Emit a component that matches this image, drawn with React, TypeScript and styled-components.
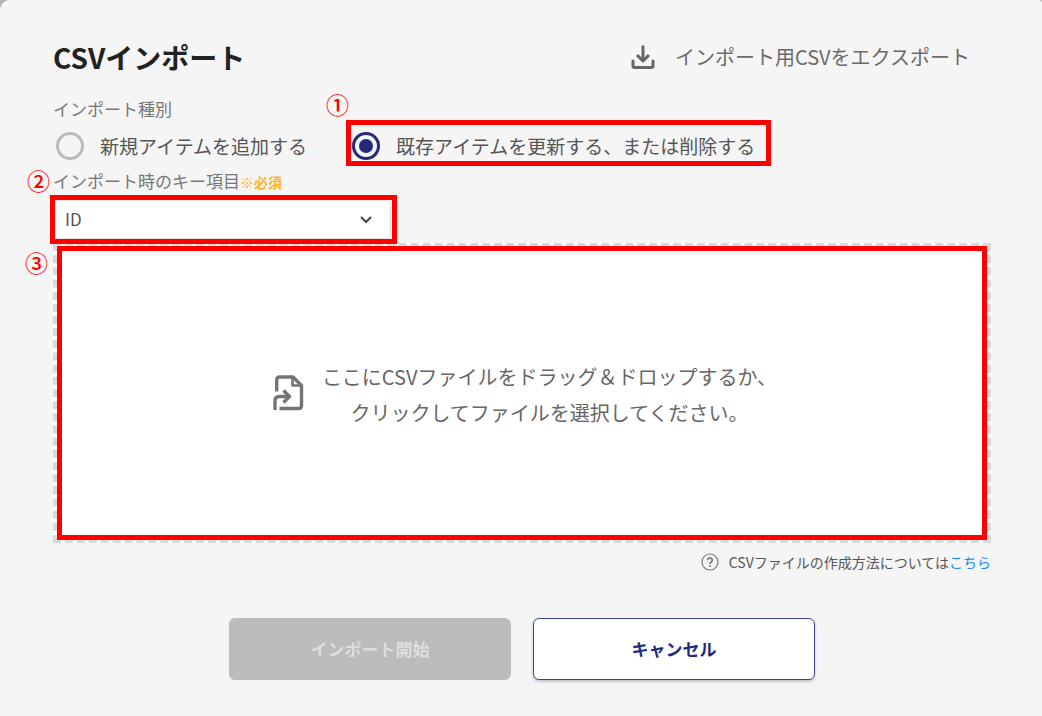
import React from "react";
import styled, { createGlobalStyle, css } from "styled-components";

const GlobalStyle = createGlobalStyle`
  *, *::before, *::after { box-sizing: border-box; }
  body {
    margin: 0;
    background: #b4b4b4;
    font-family: "Noto Sans CJK JP", sans-serif;
    color: #555;
  }
  button, select { font-family: inherit; }
`;

const Dialog = styled.main`
  min-height: 100vh;
  padding: 36px 51px 36px 53px;
  border-radius: 10px 4px 0 0;
  background: #f5f5f5;
`;

const Header = styled.header`
  display: flex;
  align-items: center;
  justify-content: space-between;
  height: 42px;
  padding-right: 21px;
`;

const Title = styled.h1`
  margin: 0;
  font-size: 28px;
  line-height: 42px;
  font-weight: 700;
  color: #222;
`;

const ExportButton = styled.button`
  display: flex;
  align-items: center;
  gap: 20px;
  padding: 0;
  border: 0;
  background: none;
  font-size: 20px;
  line-height: 30px;
  color: #6b6b6b;
  cursor: pointer;
`;

const FieldSet = styled.fieldset`
  margin: 0;
  padding: 19px 0 0;
  border: 0;
  min-width: 0;
`;

const labelText = css`
  font-size: 17px;
  line-height: 24px;
  color: #777;
`;

const Legend = styled.legend`
  ${labelText}
  float: left;
  width: 100%;
  padding: 0;
`;

const RadioRow = styled.div`
  clear: both;
  display: flex;
  gap: 45px;
  padding: 5px 3px 0;
`;

const RadioLabel = styled.label`
  position: relative;
  display: flex;
  align-items: center;
  gap: 16px;
  height: 40px;
  font-size: 19px;
  line-height: 28px;
  white-space: nowrap;
  cursor: pointer;
`;

const Radio = styled.input`
  appearance: none;
  flex: none;
  display: grid;
  place-items: center;
  width: 28px;
  height: 28px;
  margin: 0;
  border: 3px solid #bbb;
  border-radius: 50%;
  &:checked { border-color: #232a7c; }
  &:checked::before {
    content: "";
    width: 14px;
    height: 14px;
    border-radius: 50%;
    background: #232a7c;
  }
`;

const KeyField = styled.div`
  position: relative;
  padding-top: 3px;
`;

const KeyLabel = styled.label`
  ${labelText}
  display: block;
`;

const Required = styled.span`
  font-size: 14px;
  font-weight: 700;
  color: #fbb42c;
`;

const SelectBox = styled.div`
  position: relative;
  width: 338px;
  max-width: 100%;
  margin: 6px 0 4px;
  svg {
    position: absolute;
    right: 18px;
    top: 14px;
    pointer-events: none;
  }
`;

const Select = styled.select`
  appearance: none;
  display: block;
  width: 100%;
  height: 39px;
  padding: 0 11px 2px;
  border: 1px solid #e0e0e0;
  border-radius: 5px;
  background: #fff;
  font-size: 17px;
  color: #555;
`;

const DropZone = styled.button`
  position: relative;
  display: flex;
  align-items: center;
  justify-content: center;
  gap: 18px;
  width: 100%;
  height: 300px;
  padding: 0 0 0 6px;
  border: 4px dashed #d9d9d9;
  background: #fff;
  font-size: 20px;
  line-height: 36px;
  color: #666;
  cursor: pointer;
`;

const DropText = styled.span`
  padding-top: 4px;
`;

const Help = styled.p`
  display: flex;
  align-items: center;
  justify-content: flex-end;
  margin: 7px 0 0;
  font-size: 14px;
  line-height: 24px;
  svg { margin-right: 10px; }
`;

const Link = styled.a`
  color: #1a8cff;
  text-decoration: none;
`;

const Actions = styled.div`
  display: flex;
  justify-content: center;
  gap: 22px;
  margin-top: 44px;
`;

const ActionButton = styled.button<{ $outlined?: boolean }>`
  width: 282px;
  height: 62px;
  padding: 0 0 2px;
  border: 1px solid ${(p) => (p.$outlined ? "#3c4390" : "#bcbcbc")};
  border-radius: 6px;
  background: ${(p) => (p.$outlined ? "#fff" : "#bcbcbc")};
  box-shadow: ${(p) => (p.$outlined ? "0 2px 3px rgba(0, 0, 0, 0.2)" : "none")};
  font-size: 17px;
  font-weight: 700;
  color: ${(p) => (p.$outlined ? "#232a7c" : "#dedede")};
`;

const Highlight = styled.span<{ $inset: string }>`
  position: absolute;
  inset: ${(p) => p.$inset};
  z-index: 1;
  border: 5px solid #f00;
  pointer-events: none;
`;

const Marker = styled.span<{ $left: number; $top: number }>`
  position: absolute;
  left: ${(p) => p.$left}px;
  top: ${(p) => p.$top}px;
  z-index: 2;
  font-size: 23px;
  line-height: 24px;
  font-weight: 500;
  color: #f00;
`;

const DownloadIcon = () => (
  <svg width="24" height="24" viewBox="0 0 24 24" fill="none" stroke="#666" strokeWidth="3" strokeLinejoin="round" aria-hidden="true">
    <path d="M12 0.500V16" />
    <path d="M6 10l6 6 6-6" />
    <path d="M2 16v5q0 1.500 1.500 1.500h17q1.500 0 1.500-1.500V16" strokeLinecap="round" />
  </svg>
);

const FileImportIcon = () => (
  <svg width="31" height="36" viewBox="0 0 31 36" fill="none" stroke="#757575" strokeWidth="3.400" strokeLinejoin="round" aria-hidden="true">
    <path d="M3.700 16.500V5Q3.700 2 6.700 2H20L28.500 10.500V30.500Q28.500 33.500 25.500 33.500H6.500" />
    <path d="M19.500 2.500V10.500H28" strokeWidth="2.600" />
    <path d="M2 35V26Q2 21.500 6.500 21.500H15.500" />
    <path d="M10.500 15.500L16.500 21.500L10.500 27.500" />
  </svg>
);

const ChevronIcon = () => (
  <svg width="14" height="12" viewBox="0 0 14 12" fill="none" stroke="#444" strokeWidth="2" aria-hidden="true">
    <path d="M2 3l5 5 5-5" />
  </svg>
);

const QuestionIcon = () => (
  <svg width="18" height="18" viewBox="0 0 18 18" fill="none" stroke="#777" aria-hidden="true">
    <circle cx="9" cy="9" r="8" strokeWidth="1.200" />
    <path d="M6.600 7.200a2.400 2.200 0 1 1 3.700 1.800q-1.300.8-1.300 2" strokeWidth="1.600" />
    <path d="M9 12.200v1.700" strokeWidth="1.700" />
  </svg>
);

export default function App() {
  return (
    <>
      <GlobalStyle />
      <Dialog>
        <Header>
          <Title>CSVインポート</Title>
          <ExportButton type="button">
            <DownloadIcon />
            インポート用CSVをエクスポート
          </ExportButton>
        </Header>

        <FieldSet>
          <Legend>インポート種別</Legend>
          <RadioRow>
            <RadioLabel>
              <Radio type="radio" name="mode" value="add" />
              新規アイテムを追加する
            </RadioLabel>
            <RadioLabel>
              <Radio type="radio" name="mode" value="update" defaultChecked />
              既存アイテムを更新する、または削除する
              <Highlight $inset="-6px -16px 0 -6px" />
              <Marker $left={-26} $top={-34}>①</Marker>
            </RadioLabel>
          </RadioRow>
        </FieldSet>

        <KeyField>
          <Marker $left={-26} $top={2}>②</Marker>
          <KeyLabel htmlFor="key-field">
            インポート時のキー項目<Required>※必須</Required>
          </KeyLabel>
          <SelectBox>
            <Select id="key-field" defaultValue="id">
              <option value="id">ID</option>
            </Select>
            <ChevronIcon />
            <Highlight $inset="-5px -6px -5px -3px" />
          </SelectBox>
        </KeyField>

        <DropZone type="button">
          <FileImportIcon />
          <DropText>
            ここにCSVファイルをドラッグ＆ドロップするか、
            <br />
            クリックしてファイルを選択してください。
          </DropText>
          <Highlight $inset="-1px 0" />
          <Marker $left={-32} $top={3}>③</Marker>
        </DropZone>

        <Help>
          <QuestionIcon />
          CSVファイルの作成方法については<Link href="#help">こちら</Link>
        </Help>

        <Actions>
          <ActionButton type="button" disabled>インポート開始</ActionButton>
          <ActionButton type="button" $outlined>キャンセル</ActionButton>
        </Actions>
      </Dialog>
    </>
  );
}
